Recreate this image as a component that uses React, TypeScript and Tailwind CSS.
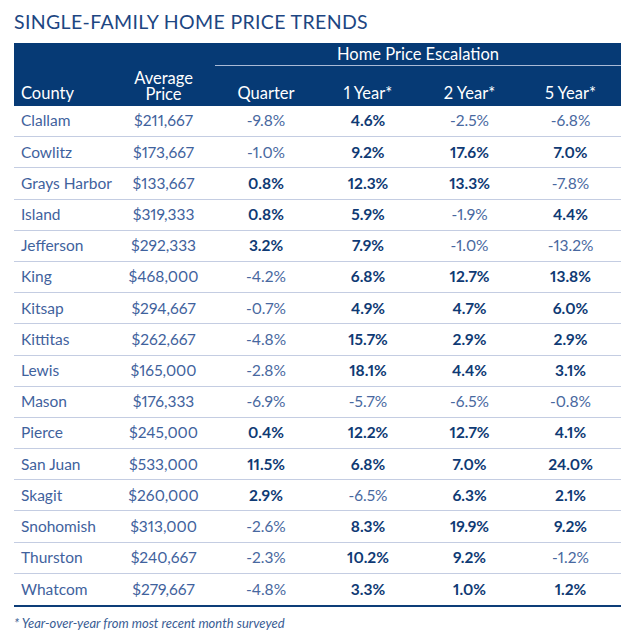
const rows: string[][] = [
  ["Clallam", "$211,667", "-9.8%", "4.6%", "-2.5%", "-6.8%"],
  ["Cowlitz", "$173,667", "-1.0%", "9.2%", "17.6%", "7.0%"],
  ["Grays Harbor", "$133,667", "0.8%", "12.3%", "13.3%", "-7.8%"],
  ["Island", "$319,333", "0.8%", "5.9%", "-1.9%", "4.4%"],
  ["Jefferson", "$292,333", "3.2%", "7.9%", "-1.0%", "-13.2%"],
  ["King", "$468,000", "-4.2%", "6.8%", "12.7%", "13.8%"],
  ["Kitsap", "$294,667", "-0.7%", "4.9%", "4.7%", "6.0%"],
  ["Kittitas", "$262,667", "-4.8%", "15.7%", "2.9%", "2.9%"],
  ["Lewis", "$165,000", "-2.8%", "18.1%", "4.4%", "3.1%"],
  ["Mason", "$176,333", "-6.9%", "-5.7%", "-6.5%", "-0.8%"],
  ["Pierce", "$245,000", "0.4%", "12.2%", "12.7%", "4.1%"],
  ["San Juan", "$533,000", "11.5%", "6.8%", "7.0%", "24.0%"],
  ["Skagit", "$260,000", "2.9%", "-6.5%", "6.3%", "2.1%"],
  ["Snohomish", "$313,000", "-2.6%", "8.3%", "19.9%", "9.2%"],
  ["Thurston", "$240,667", "-2.3%", "10.2%", "9.2%", "-1.2%"],
  ["Whatcom", "$279,667", "-4.8%", "3.3%", "1.0%", "1.2%"],
];

const cols = "grid grid-cols-[98px_103px_102px_102px_101px_101px]";

export default function App() {
  return (
    <div className="w-[636px] h-[642px] bg-white font-['Lato','Liberation_Sans',sans-serif] proportional-nums px-[14px] pt-[10px]">
      {/* Title */}
      <h1 className="text-[19.5px] leading-[24px] tracking-[0.35px] text-[#1d4682] h-[33px]">
        SINGLE-FAMILY HOME PRICE TRENDS
      </h1>

      <div className="w-[607px]">
        {/* Header */}
        <div className={`${cols} bg-[#063a75] text-white text-[16.5px] h-[63px] grid-rows-[23px_40px]`}>
          <div className="row-span-2 flex items-end pl-[7px] pb-[4px] leading-[17px]">County</div>
          <div className="row-span-2 flex items-end justify-center pb-[4px] leading-[16px] text-center">
            <div>
              Average
              <br />
              Price
            </div>
          </div>
          <div className="col-span-4 flex items-center justify-center border-b border-[#a9bad6] leading-[17px]">
            Home Price Escalation
          </div>
          {["Quarter", "1 Year*", "2 Year*", "5 Year*"].map((h) => (
            <div key={h} className="flex items-end justify-center pb-[4px] leading-[17px]">
              {h}
            </div>
          ))}
        </div>

        {/* Body */}
        {rows.map((r, i) => {
          const last = i === rows.length - 1;
          return (
            <div
              key={r[0]}
              className={`${cols} items-center text-[15.5px] ${
                last ? "h-[33px] border-b-2 border-[#0d3d78]" : "h-[31.2px] border-b border-[#c4cde2]"
              }`}
            >
              <div className="pl-[7px] text-[#3f629d]">{r[0]}</div>
              <div className="text-center text-[#3f629d]">{r[1]}</div>
              {r.slice(2).map((v, j) => (
                <div
                  key={j}
                  className={`text-center ${
                    v.startsWith("-") ? "text-[#4868a0]" : "font-bold text-[#0f3a74]"
                  }`}
                >
                  {v}
                </div>
              ))}
            </div>
          );
        })}
      </div>

      <p className="mt-[7px] text-[13px] italic text-[#3a5d94]">
        * Year-over-year from most recent month surveyed
      </p>
    </div>
  );
}
